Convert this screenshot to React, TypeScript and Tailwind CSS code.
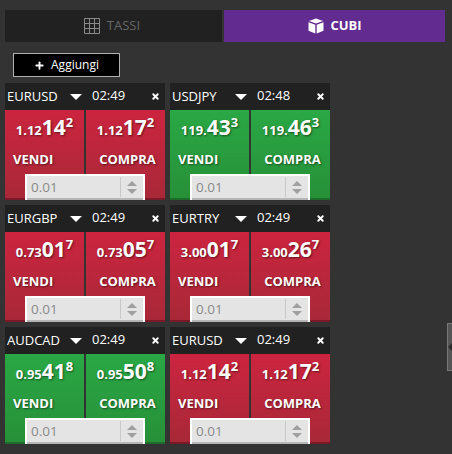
import { Plus, X } from "lucide-react";

type Quote = {
  pair: string;
  time: string;
  up: boolean;
  sell: [string, string, string];
  buy: [string, string, string];
};

const quotes: Quote[] = [
  { pair: "EURUSD", time: "02:49", up: false, sell: ["1.12", "14", "2"], buy: ["1.12", "17", "2"] },
  { pair: "USDJPY", time: "02:48", up: true, sell: ["119.", "43", "3"], buy: ["119.", "46", "3"] },
  { pair: "EURGBP", time: "02:49", up: false, sell: ["0.73", "01", "7"], buy: ["0.73", "05", "7"] },
  { pair: "EURTRY", time: "02:49", up: false, sell: ["3.00", "01", "7"], buy: ["3.00", "26", "7"] },
  { pair: "AUDCAD", time: "02:49", up: true, sell: ["0.95", "41", "8"], buy: ["0.95", "50", "8"] },
  { pair: "EURUSD", time: "02:49", up: false, sell: ["1.12", "14", "2"], buy: ["1.12", "17", "2"] },
];

function CubeIcon() {
  return (
    <svg width="16" height="16" viewBox="0 0 16 16" fill="#fff">
      <path d="M8 0.5 L15 3 L8 5.6 L1 3 Z" />
      <path d="M0.5 4.2 L7.3 6.8 V15.5 L0.5 12.8 Z" />
      <path d="M15.5 4.2 L8.7 6.8 V15.5 L15.5 12.8 Z" />
    </svg>
  );
}

function GridIcon() {
  return (
    <svg width="16" height="16" viewBox="0 0 16 16" fill="none" stroke="#8a8a8a" strokeWidth="1">
      <path d="M0.5 0.5H15.5V15.5H0.5Z" />
      <path d="M5.5 0.5V15.5M10.5 0.5V15.5M0.5 5.5H15.5M0.5 10.5H15.5" />
    </svg>
  );
}

function Price({ label, value, up }: { label: string; value: [string, string, string]; up: boolean }) {
  return (
    <div
      className={`flex-1 h-full pt-[6px] flex flex-col items-center border-b-2 ${
        up
          ? "bg-gradient-to-b from-[#2aa845] to-[#279038] border-[#1d6a2a]"
          : "bg-gradient-to-b from-[#cc243f] to-[#a82838] border-[#7a1a26]"
      }`}
    >
      <div className="h-[36px] flex items-start text-white font-bold [text-shadow:1px_1px_2px_rgba(0,0,0,0.5)]">
        <span className="text-[13px] leading-[13px] mt-[8px]">{value[0]}</span>
        <span className="text-[21px] leading-[21px] mt-[1px]">{value[1]}</span>
        <span className="text-[13px] leading-[13px]">{value[2]}</span>
      </div>
      <div className="w-full text-[13px] leading-[14px] font-bold text-white [text-shadow:1px_1px_2px_rgba(0,0,0,0.5)]">
        <span className={label === "VENDI" ? "block pl-[8px]" : "block pl-[4px] text-center"}>{label}</span>
      </div>
    </div>
  );
}

function Card({ quote }: { quote: Quote }) {
  return (
    <div className="relative w-[160px] h-[117px]">
      <div className="h-[27px] bg-[#212121] flex items-center text-white text-[13px] pl-[2px]">
        <span className="w-[63px]">{quote.pair}</span>
        <span className="w-0 h-0 mr-[10px] border-x-[6px] border-x-transparent border-t-[6px] border-t-white" />
        <span className="flex-1 -mt-[1px]">{quote.time}</span>
        <X size={9} strokeWidth={5} className="mr-[5px]" />
      </div>
      <div className="h-[90px] flex gap-[2px]">
        <Price label="VENDI" value={quote.sell} up={quote.up} />
        <Price label="COMPRA" value={quote.buy} up={quote.up} />
      </div>
      <div className="absolute left-[20px] top-[91px] w-[120px] h-[26px] bg-white px-[2px] pt-[2px]">
        <div className="h-[24px] bg-[#e4e4e4] border-b-2 border-[#b5b5b5] flex items-center text-[13.5px] text-[#8a8a8a]">
          <span className="flex-1 pl-[4px]">0.01</span>
          <span className="w-[23px] h-[20px] border-l border-[#c8c8c8] flex flex-col items-center justify-center gap-[3px]">
            <span className="w-0 h-0 border-x-[5px] border-x-transparent border-b-[5px] border-b-[#a0a0a0]" />
            <span className="w-0 h-0 border-x-[5px] border-x-transparent border-t-[5px] border-t-[#a0a0a0]" />
          </span>
        </div>
      </div>
    </div>
  );
}

export default function App() {
  return (
    <div className="relative w-[452px] h-[454px] overflow-hidden bg-[#333333] font-['Open_Sans',sans-serif]">
      <div className="pl-[5px] pt-[10px] flex gap-[2px]">
        <div className="w-[217px] h-[32px] pr-[3px] bg-[#212121] flex items-center justify-center gap-[7px] text-[13px] text-[#666666]">
          <GridIcon />
          TASSI
        </div>
        <div className="w-[221px] h-[32px] pl-[1px] bg-[#622b8f] flex items-center justify-center gap-[6px] text-[13px] font-bold text-white">
          <CubeIcon />
          CUBI
        </div>
      </div>
      <div className="pl-[13px] pt-[11px]">
        <button className="w-[107px] h-[24px] bg-black border border-[#b0b0b0] flex items-center justify-center gap-[6px] text-[12px] text-white">
          <Plus size={11} strokeWidth={4} />
          Aggiungi
        </button>
      </div>
      <div className="pl-[5px] pt-[6px] grid grid-cols-[160px_160px] gap-x-[5px] gap-y-[5px]">
        {quotes.map((q, i) => (
          <Card key={i} quote={q} />
        ))}
      </div>
      <div className="absolute right-0 top-[323px] w-[5px] h-[48px] bg-[#555555] border border-r-0 border-[#777777] flex items-center">
        <span className="w-0 h-0 border-y-[4px] border-y-transparent border-r-[4px] border-r-[#2c2c2c]" />
      </div>
    </div>
  );
}
